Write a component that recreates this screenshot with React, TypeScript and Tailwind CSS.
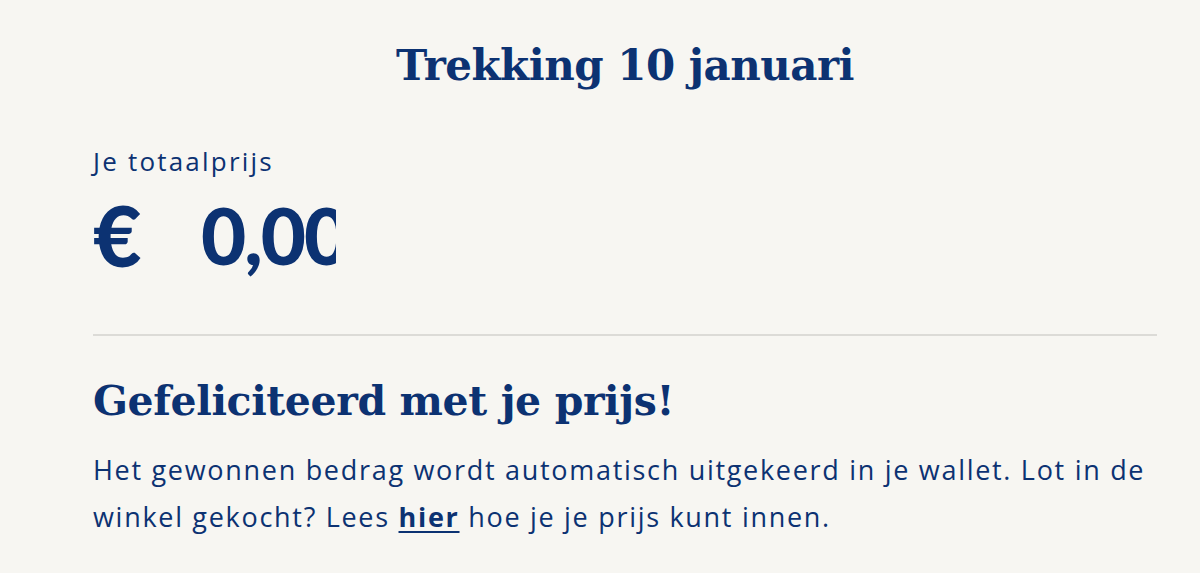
const navy = "text-[#0c3272]";

export default function App() {
  return (
    <div className="min-h-[573px] bg-[#f7f6f2] pl-[93px] pr-[43px] pt-[38px] font-['Open_Sans','Liberation_Sans',sans-serif]">
      <h1 className={`${navy} text-center font-['DejaVu_Serif',serif] text-[42px] font-bold leading-[56px] tracking-[-0.5px]`}>
        Trekking 10 januari
      </h1>

      <div className="mt-[50px]">
        <p className={`${navy} text-[26px] font-normal leading-[34px] tracking-[2.2px]`}>Je totaalprijs</p>
        <div className={`${navy} mt-[12px] flex items-center font-['Lato',sans-serif] text-[78px] font-black leading-[90px]`}>
          <span className="w-[108px] text-[84px]">€</span>
          <span className="w-[135px] overflow-hidden whitespace-nowrap tracking-[-2px]">0,00</span>
        </div>
      </div>

      <hr className="mt-[54px] border-t-2 border-[#dcdbd7]" />

      <h2 className={`${navy} mt-[40px] font-['DejaVu_Serif',serif] text-[41px] font-bold leading-[50px] tracking-[-0.4px]`}>
        Gefeliciteerd met je prijs!
      </h2>
      <p className={`${navy} mt-[20px] text-[27px] font-normal leading-[47px] tracking-[1.7px]`}>
        Het gewonnen bedrag wordt automatisch uitgekeerd in je wallet. Lot in de winkel gekocht? Lees{" "}
        <a href="#" className="font-bold underline decoration-2 underline-offset-4">
          hier
        </a>{" "}
        hoe je je prijs kunt innen.
      </p>
    </div>
  );
}
